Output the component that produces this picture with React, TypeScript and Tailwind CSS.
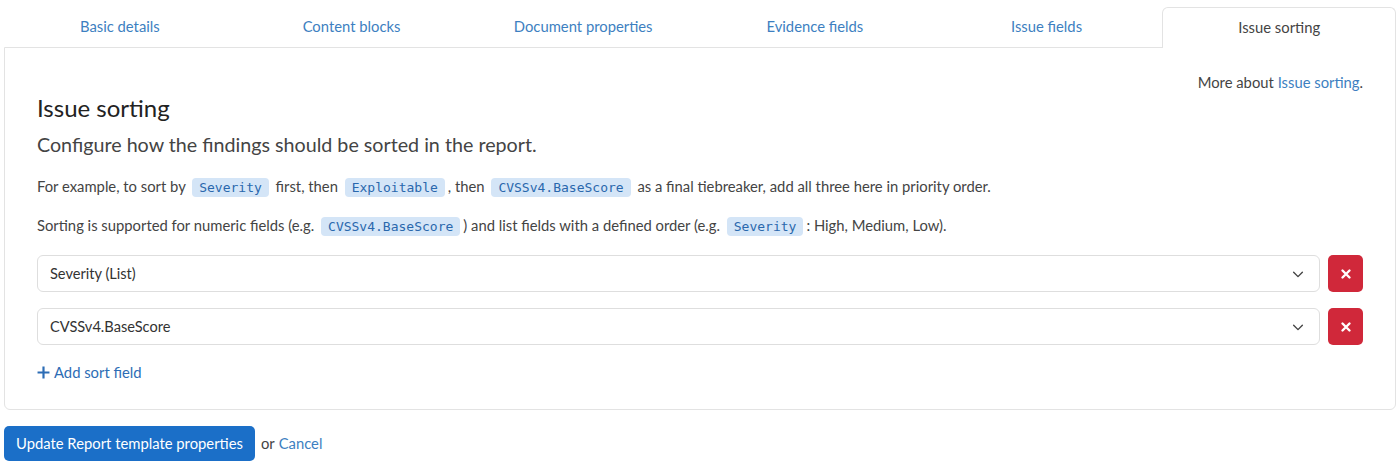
import React from "react";

const tabs = ["Basic details", "Content blocks", "Document properties", "Evidence fields", "Issue fields", "Issue sorting"];

function Code({ children }: { children: React.ReactNode }) {
  return (
    <code className="mx-[3px] rounded-[4px] bg-[#d4e5f7] px-[7px] py-[2px] font-['DejaVu_Sans_Mono',monospace] text-[13px] leading-[14px] text-[#2a68ad]">
      {children}
    </code>
  );
}

function Chevron() {
  return (
    <svg width="14" height="14" viewBox="0 0 16 16" fill="none" stroke="#444" strokeWidth="1.6" strokeLinecap="round" strokeLinejoin="round">
      <path d="M3 6l5 5 5-5" />
    </svg>
  );
}

function SortRow({ label }: { label: string }) {
  return (
    <div className="flex items-center gap-2">
      <div className="flex h-[37px] flex-1 items-center justify-between rounded-[6px] border border-[#dedede] bg-white pl-3 pr-[14px] text-[14.6px] text-[#333]">
        <span>{label}</span>
        <Chevron />
      </div>
      <button className="flex h-[37px] w-[35px] items-center justify-center rounded-[5px] bg-[#d0283a]">
        <svg width="12" height="12" viewBox="0 0 12 12" stroke="white" strokeWidth="2.4" strokeLinecap="round">
          <path d="M2.5 2.5l7 7M9.5 2.5l-7 7" />
        </svg>
      </button>
    </div>
  );
}

export default function App() {
  return (
    <div className="bg-white px-[4px] font-['Lato',sans-serif] text-[#333]">
      <div className="flex h-[47px] items-end">
        {tabs.map((t, i) =>
          i === tabs.length - 1 ? (
            <div key={t} className="relative z-10 -mb-px flex h-[41px] flex-1 items-center justify-center rounded-t-[6px] border border-b-0 border-[#e3e3e3] bg-white text-[14.8px] text-[#444]">
              <span className="-mt-[1px]">{t}</span>
            </div>
          ) : (
            <div key={t} className="flex h-[41px] flex-1 items-center justify-center text-[14.8px] text-[#3d7fc1]">
              <span className="-mt-[1px]">{t}</span>
            </div>
          )
        )}
      </div>
      <div className="h-[363px] rounded-b-[6px] border border-[#e3e3e3] px-[32px] pt-[24px]">
        <div className="text-right text-[14.8px] leading-[20px] text-[#444]">
          More about <a className="text-[#3d7fc1]">Issue sorting</a>.
        </div>
        <h2 className="mt-[2px] text-[24px] leading-[28px] text-[#222]">Issue sorting</h2>
        <p className="mt-[11px] text-[19.7px] leading-[24px] text-[#444]">Configure how the findings should be sorted in the report.</p>
        <p className="mt-[18px] text-[14.8px] leading-[22px] text-[#444]">
          For example, to sort by <Code>Severity</Code> first, then <Code>Exploitable</Code>, then <Code>CVSSv4.BaseScore</Code> as a final tiebreaker, add all three here in priority order.
        </p>
        <p className="mt-[17px] text-[14.8px] leading-[22px] text-[#444]">
          Sorting is supported for numeric fields (e.g. <Code>CVSSv4.BaseScore</Code>) and list fields with a defined order (e.g. <Code>Severity</Code>: High, Medium, Low).
        </p>
        <div className="mt-[19px] flex flex-col gap-[16px]">
          <SortRow label="Severity (List)" />
          <SortRow label="CVSSv4.BaseScore" />
        </div>
        <div className="mt-[17px] flex h-[20px] items-center gap-[4px] text-[14.8px] text-[#2d6db5]">
          <svg width="13" height="13" viewBox="0 0 12 12" stroke="#2d6db5" strokeWidth="2">
            <path d="M6 0.5v11M0.5 6h11" />
          </svg>
          <span>Add sort field</span>
        </div>
      </div>
      <div className="mt-[16px] flex items-center gap-[6px] text-[14.8px]">
        <button className="h-[35px] rounded-[5px] bg-[#1b6fc8] px-[12px] text-[14.8px] text-white">Update Report template properties</button>
        <span className="text-[#444]">or</span>
        <a className="-ml-[2px] text-[#3d7fc1]">Cancel</a>
      </div>
    </div>
  );
}
